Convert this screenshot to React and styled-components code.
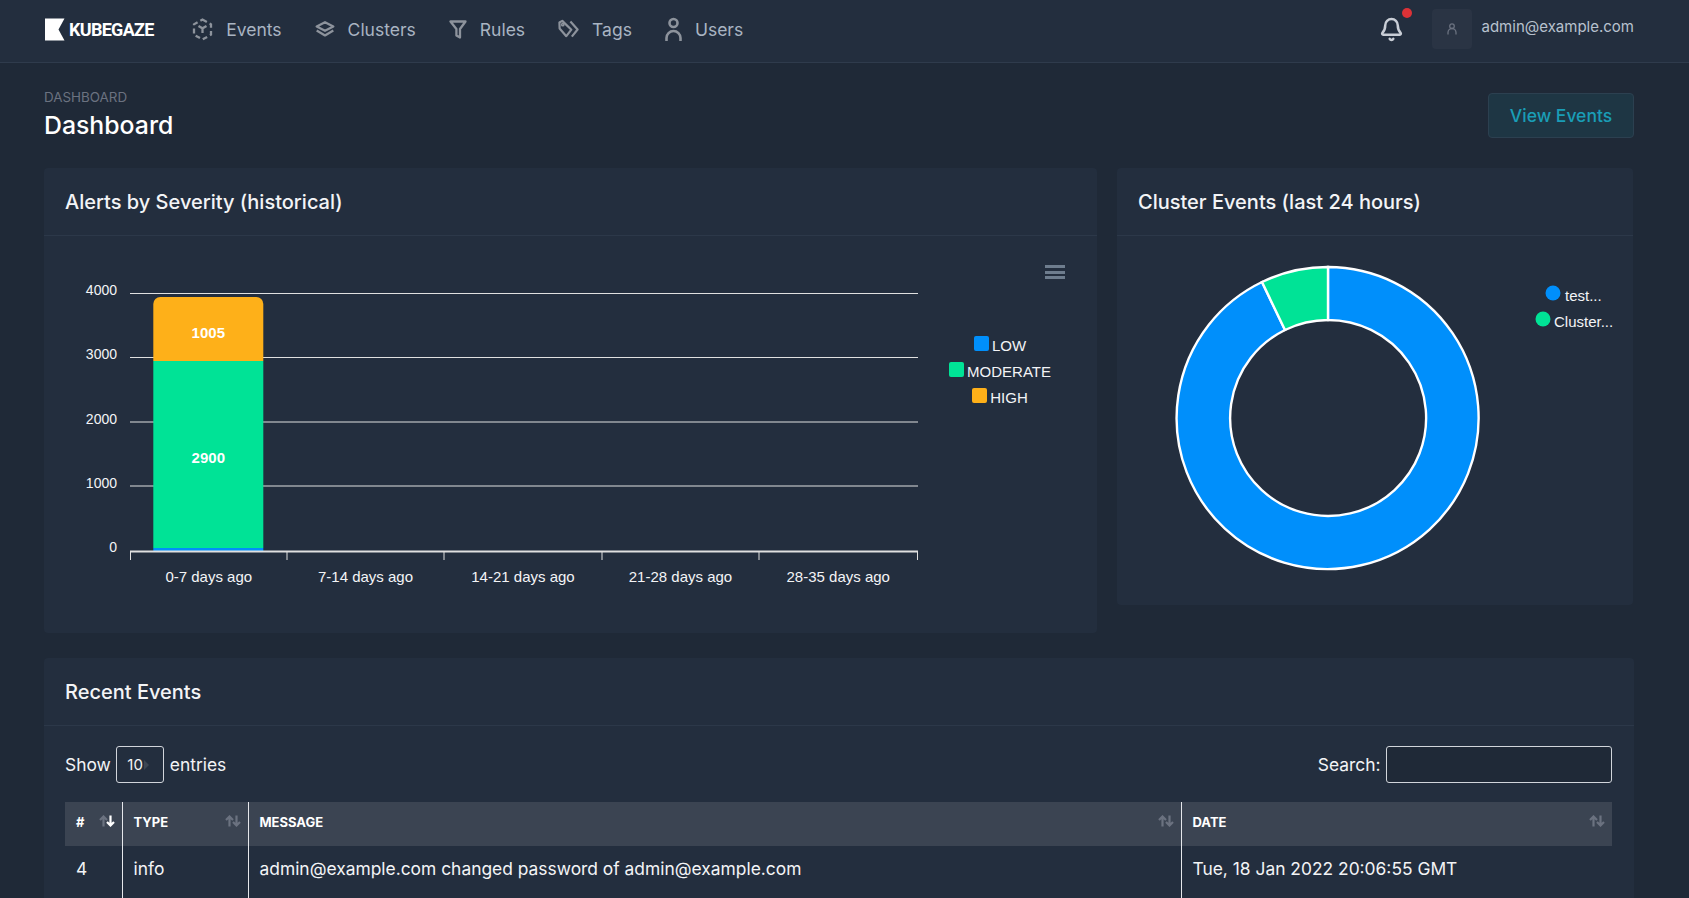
import styled, { createGlobalStyle } from "styled-components";
import { Bell } from "lucide-react";

const GlobalStyle = createGlobalStyle`
  html, body {
    margin: 0;
    height: 100%;
    overflow: hidden;
    background: #1f2937;
  }
  body {
    font-family: Inter, "Noto Sans", sans-serif;
    color: #f3f4f6;
  }
  * {
    box-sizing: border-box;
  }
`;

const navItems = [
  { label: "Events", icon: <EventsIcon /> },
  { label: "Clusters", icon: <LayersIcon /> },
  { label: "Rules", icon: <FilterIcon /> },
  { label: "Tags", icon: <TagsIcon /> },
  { label: "Users", icon: <UserIcon /> },
];

const yTicks = [
  { label: "4000", y: 293.5, textY: 295 },
  { label: "3000", y: 357.5, textY: 359 },
  { label: "2000", y: 422, textY: 423.5 },
  { label: "1000", y: 486, textY: 488 },
];

const xTicks = [130.5, 287, 444, 602, 759, 917.5];
const xLabels = ["0-7 days ago", "7-14 days ago", "14-21 days ago", "21-28 days ago", "28-35 days ago"];

const barLegend = [
  { label: "LOW", color: "#008ffb" },
  { label: "MODERATE", color: "#00e396" },
  { label: "HIGH", color: "#feb019" },
];

const columns = [
  { label: "#", width: 57, active: true },
  { label: "Type", width: 126 },
  { label: "Message", width: 933 },
  { label: "Date" },
];

function EventsIcon() {
  return (
    <svg width="21" height="23" viewBox="0 0 21 23" fill="none" stroke="#8d939c" strokeWidth="2.300">
      <path d="M10.500 1.500l8.500 4.800v10.400l-8.500 4.800L2 16.700V6.300z" strokeDasharray="5 3.200" />
      <path d="M6.500 8l4 2.300 4-2.300M10.500 10.300v4.700" />
    </svg>
  );
}

function LayersIcon() {
  return (
    <svg width="20" height="16" viewBox="0 0 20 16" fill="none" stroke="#8d939c" strokeWidth="2.300" strokeLinejoin="round">
      <path d="M10 1.200l8.300 4.300L10 9.800 1.700 5.500z" />
      <path d="M1.700 9.500l8.300 4.900 8.300-4.900" />
    </svg>
  );
}

function FilterIcon() {
  return (
    <svg width="18" height="19" viewBox="0 0 18 19" fill="none" stroke="#8d939c" strokeWidth="2.300" strokeLinejoin="round">
      <path d="M1.500 1.500h15l-5.500 7.500v8.500l-3.600-2V9z" />
    </svg>
  );
}

function TagsIcon() {
  return (
    <svg width="21" height="20" viewBox="0 0 22 20" fill="none" stroke="#8d939c" strokeWidth="2.300" strokeLinejoin="round">
      <path d="M1.500 3.200l3-1.700 9.500 9.200-5.300 6.800-7-8z" />
      <path d="M13 2.200l7.500 8.300-6 7.500" />
      <circle cx="5" cy="5.500" r="0.800" />
    </svg>
  );
}

function UserIcon() {
  return (
    <svg width="17" height="25" viewBox="0 0 17 25" fill="none" stroke="#8d939c" strokeWidth="2.600">
      <circle cx="8.500" cy="6" r="4" />
      <path d="M1.500 24v-3a6 6 0 0 1 14 0v3" />
    </svg>
  );
}

function SmallUserIcon() {
  return (
    <svg width="10" height="12" viewBox="0 0 10 12" fill="none" stroke="#6b7280" strokeWidth="1.300">
      <circle cx="5" cy="3.200" r="2.300" />
      <path d="M1 11.500V9.500a3 3 0 0 1 8 0v2" />
    </svg>
  );
}

function SortIcon({ active }) {
  return (
    <SortSvg width="16" height="12" viewBox="0 0 16 12" fill="none" strokeWidth="2.200">
      <path d="M4.500 11.500V1.500M1 5l3.500-3.500L8 5" stroke="#6b7280" />
      <path d="M11.500 0.500v10M8 7l3.500 3.500L15 7" stroke={active ? "#ffffff" : "#6b7280"} />
    </SortSvg>
  );
}

function BarChart() {
  return (
    <ChartSvg width="900" height="397" viewBox="44 236 900 397">
      {yTicks.map((tick) => (
        <g key={tick.label}>
          <line x1="130" x2="918" y1={tick.y} y2={tick.y} stroke="#e0e0e0" />
          <AxisText x="117" y={tick.textY} textAnchor="end">
            {tick.label}
          </AxisText>
        </g>
      ))}
      <AxisText x="117" y="552" textAnchor="end">
        0
      </AxisText>
      <path d="M153.300 361V304a7 7 0 0 1 7-7h96a7 7 0 0 1 7 7v57z" fill="#feb019" />
      <rect x="153.300" y="361" width="110" height="187" fill="#00e396" />
      <rect x="153.300" y="548" width="110" height="3" fill="#008ffb" />
      <BarLabel x="208.300" y="338">
        1005
      </BarLabel>
      <BarLabel x="208.300" y="463">
        2900
      </BarLabel>
      <line x1="130" x2="918" y1="551.500" y2="551.500" stroke="#e0e0e0" strokeWidth="2" />
      {xTicks.map((x) => (
        <line key={x} x1={x} x2={x} y1="551" y2="560" stroke="#e0e0e0" />
      ))}
      {xLabels.map((label, i) => (
        <TickText key={label} x={(xTicks[i] + xTicks[i + 1]) / 2} y="582" textAnchor="middle">
          {label}
        </TickText>
      ))}
    </ChartSvg>
  );
}

function DonutChart() {
  const cx = 1328;
  const cy = 418;
  const blueEnd = { ox: 1262, oy: 282, ix: 1285, iy: 330 };
  return (
    <ChartSvg width="516" height="369" viewBox="1117 236 516 369">
      <path
        d={`M${cx} ${cy - 151}A151 151 0 1 1 ${blueEnd.ox} ${blueEnd.oy}L${blueEnd.ix} ${blueEnd.iy}A98 98 0 1 0 ${cx} ${cy - 98}z`}
        fill="#008ffb"
        stroke="#fff"
        strokeWidth="2.400"
      />
      <path
        d={`M${blueEnd.ox} ${blueEnd.oy}A151 151 0 0 1 ${cx} ${cy - 151}V${cy - 98}A98 98 0 0 0 ${blueEnd.ix} ${blueEnd.iy}z`}
        fill="#00e396"
        stroke="#fff"
        strokeWidth="2.400"
      />
      <circle cx="1553" cy="293" r="7.500" fill="#008ffb" />
      <LegendText x="1565" y="301">
        test...
      </LegendText>
      <circle cx="1543" cy="319" r="7.500" fill="#00e396" />
      <LegendText x="1554" y="327">
        Cluster...
      </LegendText>
    </ChartSvg>
  );
}

export default function App() {
  return (
    <>
      <GlobalStyle />
      <Header>
        <Brand>
          <svg width="20" height="23" viewBox="0 0 20 23">
            <path d="M0 0.500H19.500L13.500 11.500l6 11H0z" fill="#fff" />
          </svg>
          <BrandName>KUBEGAZE</BrandName>
        </Brand>
        <Nav>
          {navItems.map((item) => (
            <NavItem key={item.label}>
              {item.icon}
              {item.label}
            </NavItem>
          ))}
        </Nav>
        <BellWrap>
          <Bell size={25} color="#c9ced6" strokeWidth={2.4} />
          <BellDot />
        </BellWrap>
        <Avatar>
          <SmallUserIcon />
        </Avatar>
        <Email>admin@example.com</Email>
      </Header>

      <Content>
        <TitleRow>
          <div>
            <Crumb>DASHBOARD</Crumb>
            <PageTitle>Dashboard</PageTitle>
          </div>
          <ViewButton type="button">View Events</ViewButton>
        </TitleRow>

        <ChartGrid>
          <Card>
            <CardHeader>Alerts by Severity (historical)</CardHeader>
            <BarChartBody>
              <BarChart />
              <Legend>
                {barLegend.map((item) => (
                  <LegendRow key={item.label}>
                    <Swatch $color={item.color} />
                    {item.label}
                  </LegendRow>
                ))}
              </Legend>
              <MenuIcon>
                <span />
                <span />
                <span />
              </MenuIcon>
            </BarChartBody>
          </Card>
          <Card>
            <CardHeader>Cluster Events (last 24 hours)</CardHeader>
            <DonutChart />
          </Card>
        </ChartGrid>

        <TableCard>
          <CardHeader>Recent Events</CardHeader>
          <TableBody>
            <Controls>
              <ControlLabel>
                Show
                <SelectBox>
                  <PageSize defaultValue="10">
                    <option value="10">10</option>
                    <option value="25">25</option>
                  </PageSize>
                </SelectBox>
                entries
              </ControlLabel>
              <ControlLabel>
                Search:
                <SearchInput type="text" />
              </ControlLabel>
            </Controls>
            <Table>
              <thead>
                <tr>
                  {columns.map((col) => (
                    <Th key={col.label} style={col.width ? { width: col.width } : undefined}>
                      {col.label}
                      <SortIcon active={col.active} />
                    </Th>
                  ))}
                </tr>
              </thead>
              <tbody>
                <tr>
                  <Td>4</Td>
                  <Td>info</Td>
                  <Td>admin@example.com changed password of admin@example.com</Td>
                  <Td>Tue, 18 Jan 2022 20:06:55 GMT</Td>
                </tr>
              </tbody>
            </Table>
          </TableBody>
        </TableCard>
      </Content>
    </>
  );
}

const Header = styled.header`
  display: flex;
  align-items: center;
  height: 63px;
  padding: 0 55px 4px 45px;
  background: #232e3e;
  border-bottom: 1px solid #2f3b4c;
`;

const Brand = styled.div`
  display: flex;
  align-items: center;
  gap: 4px;
  margin-right: 38.500px;
`;

const BrandName = styled.span`
  font-family: Roboto, sans-serif;
  font-weight: 700;
  font-size: 18px;
  letter-spacing: -0.7px;
  color: #fff;
`;

const Nav = styled.nav`
  display: flex;
  align-items: center;
  gap: 33px;
  flex: 1;
`;

const NavItem = styled.a`
  display: flex;
  align-items: center;
  gap: 13px;
  font-size: 17.500px;
  color: #a9b4c2;
`;

const BellWrap = styled.div`
  position: relative;
  display: flex;
  margin-right: 28px;
`;

const BellDot = styled.span`
  position: absolute;
  top: -9px;
  right: -8px;
  width: 10px;
  height: 10px;
  border-radius: 50%;
  background: #dc3237;
`;

const Avatar = styled.div`
  display: flex;
  align-items: center;
  justify-content: center;
  width: 40px;
  height: 40px;
  margin: -1px 10px 0 0;
  border-radius: 4px;
  background: #2a3444;
`;

const Email = styled.span`
  font-size: 15px;
  color: #b8c2ce;
  margin-top: -6px;
`;

const Content = styled.main`
  padding: 0 55px 0 44px;
`;

const TitleRow = styled.div`
  display: flex;
  justify-content: space-between;
  align-items: flex-start;
  padding-top: 26px;
  height: 105px;
`;

const Crumb = styled.div`
  font-size: 13.400px;
  line-height: 16px;
  color: #6b7280;
`;

const PageTitle = styled.h1`
  margin: 4px 0 0;
  font-size: 24.800px;
  line-height: 32px;
  font-weight: 500;
  color: #fff;
`;

const ViewButton = styled.button`
  width: 146px;
  height: 45px;
  margin-top: 4px;
  padding: 0;
  font-family: inherit;
  font-size: 17.500px;
  font-weight: 500;
  color: #1a9db6;
  background: #1e3644;
  border: 1px solid #2c4050;
  border-radius: 4px;
`;

const ChartGrid = styled.div`
  display: grid;
  grid-template-columns: 1053px 516px;
  gap: 20px;
  align-items: start;
`;

const Card = styled.section`
  background: #232e3e;
  border-radius: 4px;
`;

const CardHeader = styled.h2`
  margin: 0;
  height: 68px;
  padding: 0 21px;
  display: flex;
  align-items: center;
  font-size: 20px;
  font-weight: 500;
  color: #f3f4f6;
  border-bottom: 1px solid #2c3849;
`;

const BarChartBody = styled.div`
  position: relative;
  display: flex;
  height: 397px;
`;

const ChartSvg = styled.svg`
  display: block;
  flex: none;
`;

const AxisText = styled.text`
  font-family: "Liberation Sans", sans-serif;
  font-size: 14px;
  fill: #f3f4f6;
`;

const TickText = styled(AxisText)`
  font-size: 15px;
`;

const BarLabel = styled.text`
  font-family: "Liberation Sans", sans-serif;
  font-size: 15px;
  font-weight: 700;
  fill: #fff;
  text-anchor: middle;
`;

const LegendText = styled.text`
  font-family: "Liberation Sans", sans-serif;
  font-size: 15px;
  fill: #f3f4f6;
`;

const Legend = styled.div`
  display: flex;
  flex-direction: column;
  align-items: center;
  gap: 8px;
  width: 120px;
  margin: 100px 0 0 -4px;
`;

const LegendRow = styled.div`
  display: flex;
  align-items: center;
  gap: 3px;
  height: 18px;
  font-family: "Liberation Sans", sans-serif;
  font-size: 15px;
  color: #f3f4f6;
`;

const Swatch = styled.span`
  width: 15px;
  height: 15px;
  border-radius: 2px;
  background: ${(p) => p.$color};
  margin-top: -3px;
`;

const MenuIcon = styled.div`
  position: absolute;
  top: 29px;
  left: 1001px;
  display: flex;
  flex-direction: column;
  gap: 2.500px;
  width: 20px;
  span {
    height: 3px;
    background: #6e7d8e;
  }
`;

const TableCard = styled(Card)`
  margin-top: 25px;
`;

const TableBody = styled.div`
  padding: 20px 22px 0 21px;
`;

const Controls = styled.div`
  display: flex;
  justify-content: space-between;
  align-items: center;
  height: 37px;
  margin-bottom: 19px;
`;

const ControlLabel = styled.label`
  display: flex;
  align-items: center;
  gap: 5.500px;
  font-size: 17.400px;
  color: #f3f4f6;
  line-height: 34px;
`;

const SelectBox = styled.span`
  position: relative;
  display: block;
  &::after {
    content: "";
    position: absolute;
    top: 14px;
    left: 28px;
    border-left: 5px solid #3d4653;
    border-top: 5px solid transparent;
    border-bottom: 5px solid transparent;
  }
`;

const PageSize = styled.select`
  display: block;
  appearance: none;
  width: 48px;
  height: 37px;
  padding: 0 0 0 10px;
  font-family: inherit;
  font-size: 15px;
  color: #f3f4f6;
  background: #232e3e;
  border: 1px solid #d1d5db;
  border-radius: 3px;
`;

const SearchInput = styled.input`
  width: 226px;
  height: 37px;
  background: #1f2937;
  border: 1px solid #d1d5db;
  border-radius: 3px;
`;

const Table = styled.table`
  width: 100%;
  table-layout: fixed;
  border-collapse: collapse;
`;

const Th = styled.th`
  position: relative;
  height: 44px;
  padding: 0 11px 4px;
  text-align: left;
  font-size: 13px;
  font-weight: 700;
  text-transform: uppercase;
  color: #fff;
  background: #3b4452;
  & + & {
    border-left: 1px solid #e5e7eb;
  }
`;

const SortSvg = styled.svg`
  position: absolute;
  top: 13px;
  right: 7px;
`;

const Td = styled.td`
  height: 90px;
  padding: 10px 11px 0;
  vertical-align: top;
  font-size: 17.400px;
  line-height: 26px;
  color: #f3f4f6;
  & + & {
    border-left: 1px solid #e5e7eb;
  }
`;
